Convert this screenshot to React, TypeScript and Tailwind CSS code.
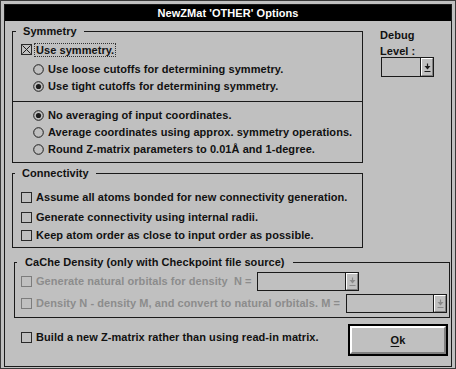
import React from "react";

const ink = "#1c1c1c";

const CheckBox = ({ checked = false, disabled = false }: { checked?: boolean; disabled?: boolean }) => (
  <span
    className={`flex h-[11px] w-[11px] shrink-0 items-center justify-center border ${
      disabled ? "border-[#7c7c7c]" : "border-[#2a2a2a]"
    }`}
  >
    {checked && (
      <svg width="9" height="9" viewBox="0 0 9 9">
        <path d="M0.5 0.5 L8.5 8.5 M8.5 0.5 L0.5 8.5" stroke={ink} strokeWidth="1" />
      </svg>
    )}
  </span>
);

const Radio = ({ on = false }: { on?: boolean }) => (
  <svg width="11" height="11" viewBox="0 0 11 11" className="shrink-0">
    <circle cx="5.5" cy="5.5" r="4.8" fill="none" stroke={ink} strokeWidth="1" />
    {on && <circle cx="5.5" cy="5.5" r="2.6" fill={ink} />}
  </svg>
);

const DownArrow = ({ disabled = false }: { disabled?: boolean }) => {
  const c = disabled ? "#8a8a8a" : ink;
  return (
    <svg width="7" height="9" viewBox="0 0 7 9">
      <path d="M3.5 0.5 V3.5" stroke={c} strokeWidth="1.2" />
      <path d="M0.5 3 H6.5 L3.5 6.5 Z" fill={c} />
      <path d="M0.5 8.5 H6.5" stroke={c} strokeWidth="1" />
    </svg>
  );
};

const Combo = ({ width, height, disabled = false }: { width: string; height: string; disabled?: boolean }) => (
  <div className={`flex shrink-0 border border-[#1a1a1a] ${width} ${height}`}>
    <div className="flex-1" />
    <div className="flex w-[13px] items-center justify-center border-l border-[#1a1a1a]">
      <div className="flex h-full w-full items-center justify-center border-t border-l border-white border-r border-b border-r-[#808080] border-b-[#808080]">
        <DownArrow disabled={disabled} />
      </div>
    </div>
  </div>
);

const Group = ({
  title,
  className,
  legendClass,
  children,
}: {
  title: string;
  className: string;
  legendClass: string;
  children: React.ReactNode;
}) => (
  <fieldset className={`border border-[#1a1a1a] ${className}`}>
    <legend className={`leading-[14px] ${legendClass}`}>{title}</legend>
    {children}
  </fieldset>
);

export default function App() {
  return (
    <div className="h-[369px] w-[456px] border border-[#3a3a3a] bg-[#c0c0c0] px-[3px] pt-[3px] pb-px font-['Liberation_Sans',Arial,sans-serif] text-[11px] font-bold tracking-[0.06px] text-[#111]">
      <div className="flex h-full flex-col border border-[#1a1a1a]">
        <div className="flex h-[16px] shrink-0 items-center justify-center bg-black text-white">
          NewZMat 'OTHER' Options
        </div>

        <div className="flex flex-1 flex-col">
          {/* top row: symmetry + connectivity, debug level */}
          <div className="flex items-start">
            <div className="ml-[7px] mt-[3px] flex w-[351px] flex-col">
              <Group title="Symmetry" className="pb-[4px]" legendClass="ml-[3px] px-[7px]">
                <div className="mt-[3px] flex h-[17px] items-center pl-[8px]">
                  <CheckBox checked />
                  <span className="ml-[2px] border border-dotted border-[#333] px-px leading-[12px]">
                    Use symmetry.
                  </span>
                </div>
                <div className="mt-[3px] flex h-[17px] items-center gap-[4px] pl-[20px]">
                  <Radio />
                  <span>Use loose cutoffs for determining symmetry.</span>
                </div>
                <div className="flex h-[17px] items-center gap-[4px] pl-[20px]">
                  <Radio on />
                  <span>Use tight cutoffs for determining symmetry.</span>
                </div>
                <div className="mt-[6px] h-px bg-[#1a1a1a]" />
                <div className="mt-[5px] flex h-[17px] items-center gap-[4px] pl-[20px]">
                  <Radio on />
                  <span>No averaging of input coordinates.</span>
                </div>
                <div className="flex h-[17px] items-center gap-[4px] pl-[20px]">
                  <Radio />
                  <span>Average coordinates using approx. symmetry operations.</span>
                </div>
                <div className="flex h-[17px] items-center gap-[4px] pl-[20px]">
                  <Radio />
                  <span>Round Z-matrix parameters to 0.01Å and 1-degree.</span>
                </div>
              </Group>

              <Group title="Connectivity" className="mt-[3px] pb-[3px]" legendClass="ml-[2px] px-[7px]">
                <div className="mt-[9px] flex h-[17px] items-center gap-[4px] pl-[8px]">
                  <CheckBox />
                  <span>Assume all atoms bonded for new connectivity generation.</span>
                </div>
                <div className="mt-[3px] flex h-[17px] items-center gap-[4px] pl-[8px]">
                  <CheckBox />
                  <span>Generate connectivity using internal radii.</span>
                </div>
                <div className="mt-px flex h-[17px] items-center gap-[4px] pl-[8px]">
                  <CheckBox />
                  <span>Keep atom order as close to input order as possible.</span>
                </div>
              </Group>
            </div>

            <div className="ml-[17px] mt-[6px] flex flex-col leading-[16px]">
              <span>Debug</span>
              <span>Level :</span>
              <div className="ml-px mt-[-2px]">
                <Combo width="w-[53px]" height="h-[20px]" />
              </div>
            </div>
          </div>

          {/* CaChe density */}
          <Group
            title="CaChe Density (only with Checkpoint file source)"
            className="ml-[9px] mr-px mt-[7px] pb-[4px]"
            legendClass="ml-[2px] px-[8px]"
          >
            <div className="mt-[3px] flex h-[19px] items-center pl-[6px] text-[#8c8c8c]">
              <CheckBox disabled />
              <span className="ml-[4px] w-[221px] whitespace-pre">Generate natural orbitals for density  N =</span>
              <Combo width="w-[102px]" height="h-[19px]" disabled />
            </div>
            <div className="mt-[3px] flex h-[19px] items-center pl-[6px] text-[#8c8c8c]">
              <CheckBox disabled />
              <span className="ml-[4px] w-[310px] whitespace-nowrap">
                Density N - density M, and convert to natural orbitals. M =
              </span>
              <Combo width="w-[101px]" height="h-[19px]" disabled />
            </div>
          </Group>

          {/* bottom row */}
          <div className="flex items-start">
            <div className="ml-[16px] mt-[11px] flex h-[17px] items-center gap-[4px]">
              <CheckBox />
              <span>Build a new Z-matrix rather than using read-in matrix.</span>
            </div>
            <button className="ml-auto mr-[3px] mt-[6px] h-[32px] w-[100px] border-2 border-black bg-[#c0c0c0] p-0">
              <span className="flex h-full w-full items-center justify-center border-2 border-t-white border-l-white border-r-[#808080] border-b-[#808080] text-[11px]">
                <span className="underline underline-offset-2">O</span>k
              </span>
            </button>
          </div>
        </div>
      </div>
    </div>
  );
}
